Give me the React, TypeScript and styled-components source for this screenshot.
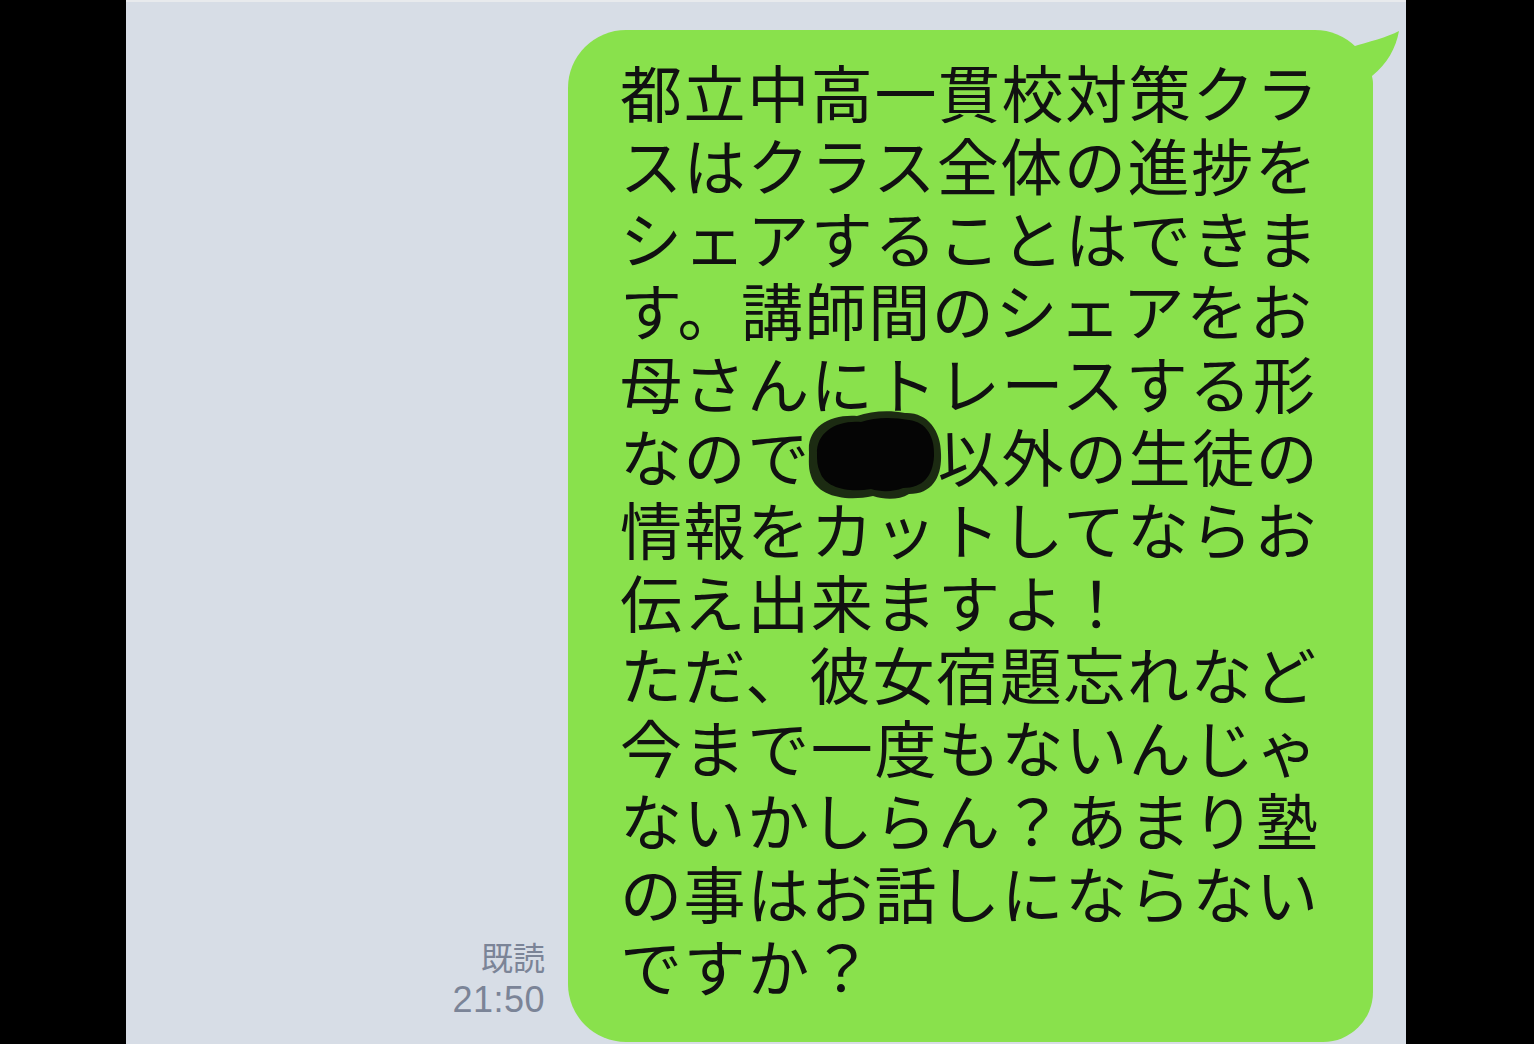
import React from 'react';
import styled, { createGlobalStyle } from 'styled-components';

const GlobalStyle = createGlobalStyle`
  html, body {
    margin: 0;
    padding: 0;
    background: #000;
  }
  body {
    width: 1534px;
    height: 1044px;
    overflow: hidden;
  }
`;

const Screen = styled.div`
  display: flex;
  width: 1534px;
  height: 1044px;
  background: #000;
`;

const ChatPanel = styled.div`
  box-sizing: border-box;
  margin-left: 126px;
  width: 1280px;
  height: 1044px;
  background: #d7dde6;
  border-top: 2px solid #e8eaed;
  padding: 28px 33px 0 0;
  display: flex;
  justify-content: flex-end;
  align-items: flex-start;
`;

const MessageRow = styled.div`
  display: flex;
  align-items: flex-end;
`;

const Meta = styled.div`
  display: flex;
  flex-direction: column;
  align-items: flex-end;
  margin: 0 23px 20px 0;
  color: #7b8497;
`;

const ReadLabel = styled.span`
  font-family: 'Noto Sans CJK JP', sans-serif;
  font-size: 32px;
  line-height: 44px;
`;

const TimeLabel = styled.span`
  font-family: 'Liberation Sans', Arial, sans-serif;
  font-size: 36px;
  line-height: 44px;
  letter-spacing: 0.5px;
`;

const Bubble = styled.div`
  position: relative;
  box-sizing: border-box;
  width: 805px;
  background: #89e14c;
  border-radius: 58px 58px 50px 58px;
  padding: 25px 0 41px 52px;
  color: #111;
  font-family: 'Noto Sans CJK JP', sans-serif;
  font-size: 62px;
  letter-spacing: 1.6px;
  line-height: 72.8px;
`;

const Tail = styled.svg`
  position: absolute;
  top: 0;
  right: -27px;
  width: 100px;
  height: 80px;
  z-index: 0;
`;

const Line = styled.div`
  position: relative;
  z-index: 1;
  display: flex;
  align-items: center;
  white-space: nowrap;
`;

const Redaction = styled.svg`
  width: 139px;
  height: 90px;
  margin: -9px -6px -9px -6px;
  flex: none;
`;

const lines = [
  '都立中高一貫校対策クラ',
  'スはクラス全体の進捗を',
  'シェアすることはできま',
  'す。講師間のシェアをお',
  '母さんにトレースする形',
  null,
  '情報をカットしてならお',
  '伝え出来ますよ！',
  'ただ、彼女宿題忘れなど',
  '今まで一度もないんじゃ',
  'ないかしらん？あまり塾',
  'の事はお話しにならない',
  'ですか？',
];

const App: React.FC = () => {
  return (
    <Screen>
      <GlobalStyle />
      <ChatPanel>
        <MessageRow>
          <Meta>
            <ReadLabel>既読</ReadLabel>
            <TimeLabel>21:50</TimeLabel>
          </Meta>
          <Bubble>
            <Tail viewBox="0 0 100 80">
              <path
                d="M0,0 C22,0 38,6 52,17 C68,12 88,7 99,1 C96,18 87,34 72,46 L73,54 L73,80 L0,80 Z"
                fill="#89e14c"
              />
            </Tail>
            {lines.map((text, i) =>
              text === null ? (
                <Line key={i}>
                  <span>なので</span>
                  <Redaction viewBox="0 0 139 90">
                    <path
                      d="M4,42 C2,18 24,4 52,6 C66,1 84,0 100,3 C122,2 136,20 136,44 C137,66 128,84 104,84 C94,90 80,90 68,86 C40,92 12,86 6,66 C3,58 4,50 4,42 Z"
                      fill="#1c2b12"
                    />
                    <path
                      d="M12,44 C11,22 32,10 56,12 C70,7 88,7 104,10 C122,12 130,28 129,46 C128,66 118,78 98,78 C88,82 76,82 66,79 C44,83 20,78 15,62 C12,56 12,50 12,44 Z"
                      fill="#050505"
                    />
                  </Redaction>
                  <span>以外の生徒の</span>
                </Line>
              ) : (
                <Line key={i}>{text}</Line>
              )
            )}
          </Bubble>
        </MessageRow>
      </ChatPanel>
    </Screen>
  );
};

export default App;
